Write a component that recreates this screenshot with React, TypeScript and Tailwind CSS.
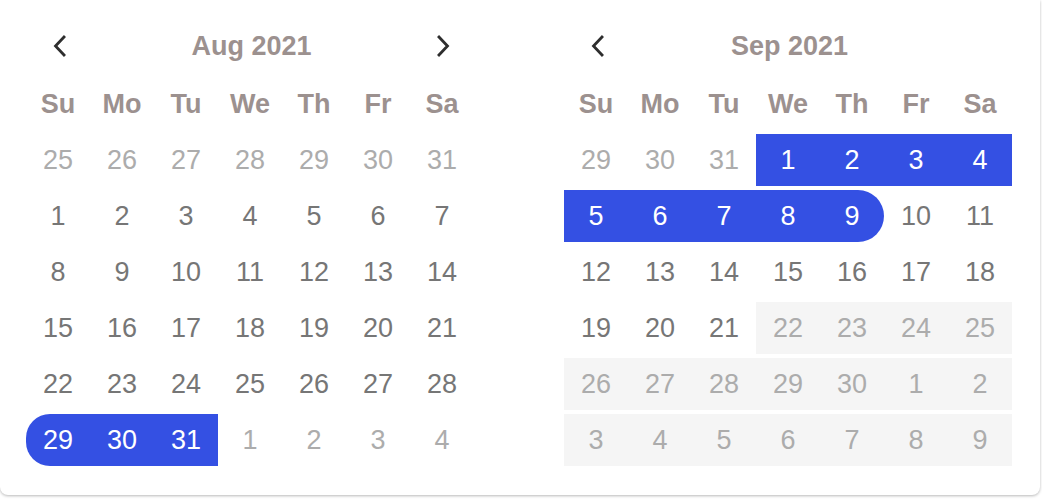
import React from 'react';

type Day = { n: number; kind: 'out' | 'in' | 'sel' | 'off'; round?: 'l' | 'r' };

const WEEK = ['Su', 'Mo', 'Tu', 'We', 'Th', 'Fr', 'Sa'];

const aug: Day[] = [
    ...[25, 26, 27, 28, 29, 30, 31].map((n) => ({ n, kind: 'out' as const })),
    ...Array.from({ length: 28 }, (_, i) => ({ n: i + 1, kind: 'in' as const })),
    { n: 29, kind: 'sel', round: 'l' },
    { n: 30, kind: 'sel' },
    { n: 31, kind: 'sel' },
    ...[1, 2, 3, 4].map((n) => ({ n, kind: 'out' as const })),
];

const sep: Day[] = [
    ...[29, 30, 31].map((n) => ({ n, kind: 'out' as const })),
    ...[1, 2, 3, 4, 5, 6, 7, 8].map((n) => ({ n, kind: 'sel' as const })),
    { n: 9, kind: 'sel', round: 'r' },
    ...Array.from({ length: 12 }, (_, i) => ({ n: i + 10, kind: 'in' as const })),
    ...[22, 23, 24, 25, 26, 27, 28, 29, 30, 1, 2, 3, 4, 5, 6, 7, 8, 9].map((n) => ({ n, kind: 'off' as const })),
];

const Chevron = ({ dir }: { dir: 'left' | 'right' }) => (
    <svg width="16" height="24" viewBox="0 0 16 24" fill="none" stroke="#2e2e2e" strokeWidth="2.8" strokeLinecap="square">
        {dir === 'left' ? <polyline points="12,3 3.5,12 12,21" /> : <polyline points="4,3 12.5,12 4,21" />}
    </svg>
);

const cellClass = (d: Day) => {
    let c = 'h-[52px] flex items-center justify-center ';
    if (d.kind === 'sel') c += 'bg-[#3450e3] text-white ';
    else if (d.kind === 'off') c += 'bg-[#f5f5f5] text-[#acacac] ';
    else if (d.kind === 'out') c += 'text-[#acacac] ';
    else c += 'text-[#767676] ';
    if (d.round === 'l') c += 'rounded-l-[24px] ';
    if (d.round === 'r') c += 'rounded-r-[26px] ';
    return c;
};

const Month = ({ title, days, next }: { title: string; days: Day[]; next?: boolean }) => (
    <div className="w-[448px]">
        <div className="h-[52px] grid grid-cols-[1fr_auto_1fr] items-center pl-[26px] pr-[23px]">
            <Chevron dir="left" />
            <span className="text-[27px] font-bold text-[#9c918f]">{title}</span>
            <span className={next ? 'justify-self-end' : 'invisible justify-self-end'}>
                <Chevron dir="right" />
            </span>
        </div>
        <div className="grid grid-cols-7 gap-y-[4px] mt-[6px] text-[27px]">
            {WEEK.map((w) => (
                <div key={w} className="h-[52px] flex items-center justify-center font-bold text-[#9c918f]">
                    {w}
                </div>
            ))}
            {days.map((d, i) => (
                <div key={i} className={cellClass(d)}>
                    {d.n}
                </div>
            ))}
        </div>
    </div>
);

const App: React.FC = () => {
    return (
        <div className="w-[1042px] h-[500px] bg-white overflow-hidden" style={{ fontFamily: '"Liberation Sans", Arial, sans-serif' }}>
            <div className="w-[1040px] h-[495px] bg-white rounded-b-[8px] shadow-[0_1px_3px_rgba(0,0,0,0.28)] flex gap-[90px] pl-[26px] pt-[20px]">
                <Month title="Aug 2021" days={aug} next />
                <Month title="Sep 2021" days={sep} />
            </div>
        </div>
    );
};

export default App;
